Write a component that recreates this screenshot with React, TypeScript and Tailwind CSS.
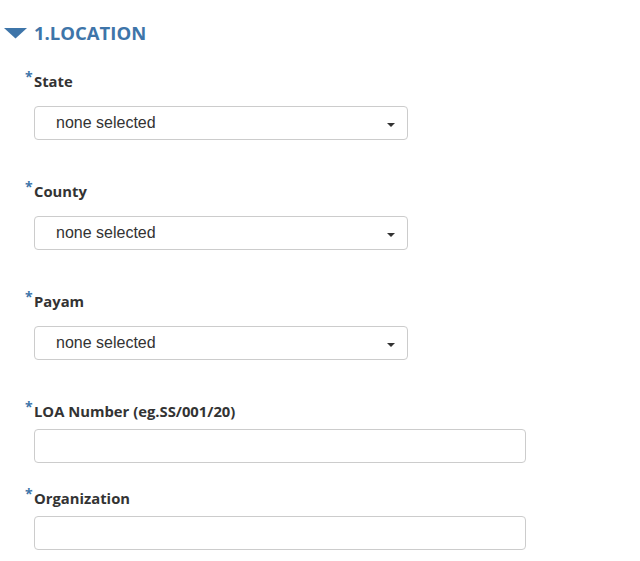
import React from "react";

const Caret = () => (
  <svg width="8" height="4" viewBox="0 0 8 4" className="absolute right-[12px] top-[16px]">
    <path d="M0 0 H8 L4 4 Z" fill="#333" />
  </svg>
);

const Label = ({ text, className }: { text: string; className?: string }) => (
  <div className={"flex h-[20px] items-start " + (className || "")}>
    <span className="w-[10px] pl-[1px] text-[14px] leading-[13px] font-bold text-[#3e75a9] relative top-[-1px]">*</span>
    <span className="text-[14.8px] leading-[20px] font-bold text-[#333]">{text}</span>
  </div>
);

const Select = ({ className }: { className?: string }) => (
  <div className={"relative ml-[10px] flex h-[34px] w-[374px] items-center rounded-[4px] border border-[#ccc] bg-white pl-[21px] " + (className || "")} style={{ fontFamily: '"Liberation Sans", Arial, sans-serif' }}>
    <span className="text-[16px] text-[#333]">none selected</span>
    <Caret />
  </div>
);

const Input = ({ className }: { className?: string }) => (
  <div className={"ml-[10px] h-[34px] w-[492px] rounded-[4px] border border-[#ccc] bg-white " + (className || "")} />
);

export default function App() {
  return (
    <div className="min-h-[561px] bg-white pt-[22px]" style={{ fontFamily: '"Open Sans", sans-serif' }}>
      <div className="flex h-[22px] items-center">
        <svg width="24" height="11" viewBox="0 0 24 11" className="ml-[4px] mr-[6px]">
          <path d="M0 0 H23 L11.5 10.5 Z" fill="#3e75a9" />
        </svg>
        <span className="text-[18.5px] leading-[22px] font-bold text-[#3e75a9]">1.LOCATION</span>
      </div>
      <div className="pl-[24px]">
        <Label text="State" className="mt-[27px]" />
        <Select className="mt-[15px]" />
        <Label text="County" className="mt-[41px]" />
        <Select className="mt-[15px]" />
        <Label text="Payam" className="mt-[41px]" />
        <Select className="mt-[15px]" />
        <Label text="LOA Number (eg.SS/001/20)" className="mt-[41px]" />
        <Input className="mt-[8px]" />
        <Label text="Organization" className="mt-[25px]" />
        <Input className="mt-[8px]" />
      </div>
    </div>
  );
}
